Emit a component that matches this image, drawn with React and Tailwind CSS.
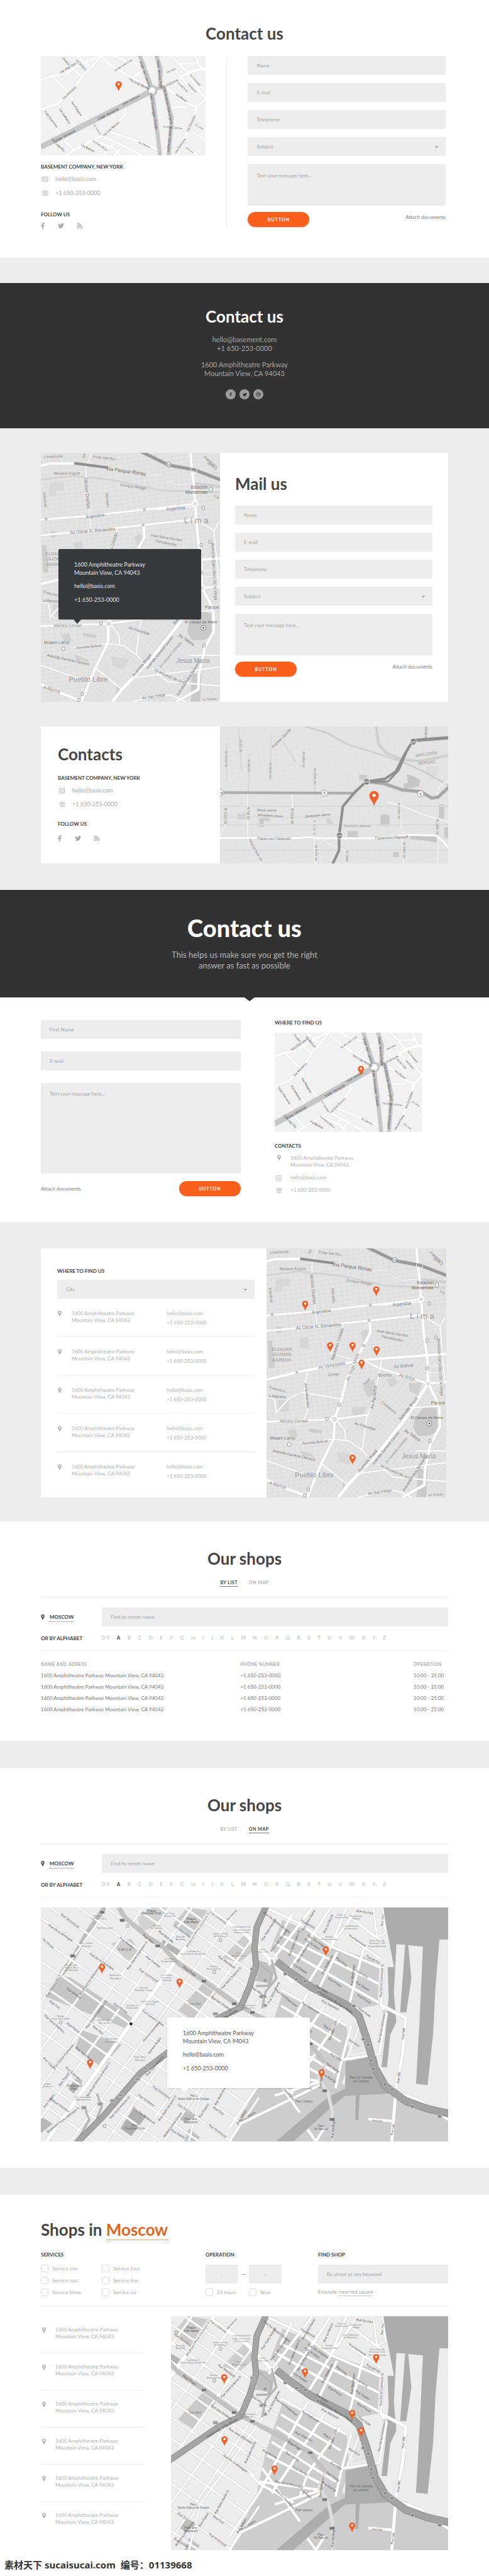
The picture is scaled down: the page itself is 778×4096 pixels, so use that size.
import React from 'react';
import { FaFacebookF, FaTwitter, FaRss, FaDribbble, FaChevronDown } from 'react-icons/fa';

/* ---------- map data ---------- */

// Every map keeps its own survey grid: origin + unit turn grid points into pixels.
// roads: [path, width, colour], areas: [path, fill], labels: [x1, y1, x2, y2, text, size, colour]

const romeMap = {
  id: 'rome',
  origin: [131, 340],
  unit: [0.4962, 0.2617],
  size: [262, 158],
  bg: '#f1f1f1',
  casing: '#e2e2e2',
  areas: [],
  roads: [
    ['M131 487L168 462L210 448L262 390L325 335', 3, '#fff'],
    ['M325 340L262 470L240 530L205 590L183 632L131 662', 3, '#fff'],
    ['M168 462L210 540L262 690L300 760L335 830L400 890L455 943', 3, '#fff'],
    ['M205 340L235 420L262 470', 3, '#fff'],
    ['M247 340L285 400', 3, '#fff'],
    ['M325 340L345 385L420 470L480 530', 3, '#fff'],
    ['M365 340L420 385L447 388', 3, '#fff'],
    ['M183 632L240 765L150 870', 2, '#fff'],
    ['M135 655L160 720L200 840L238 915', 3, '#fff'],
    ['M380 600L403 655L403 690L370 760L330 820L290 860L235 915L210 943', 3, '#fff'],
    ['M345 795L430 850L510 910', 3, '#fff'],
    ['M300 850L365 900L385 943M365 865L330 943M390 895L368 943', 3, '#fff'],
    ['M515 535L560 490L610 435L660 415', 4, '#fff'],
    ['M420 480L455 430L480 420', 3, '#fff'],
    ['M545 340L575 390L600 440L640 560L660 600', 3, '#fff'],
    ['M575 388L635 382L625 340M635 382L645 420L660 430', 3, '#fff'],
    ['M535 540L590 620L630 650L660 600M550 655L600 648', 3, '#fff'],
    ['M630 650L610 760L592 830L565 943', 4, '#fff'],
    ['M505 770L595 775L660 855M540 720L565 740', 2, '#fff'],
    ['M592 880L630 943M610 740L660 790', 3, '#fff'],
    ['M530 450L600 590M600 440L660 560M560 420L600 520', 2, '#fff'],
    ['M145 790L175 850M150 830L195 780M420 690L445 730L425 740', 2, '#f7f7f7'],
    ['M131 893L487 552', 9, '#c6c6c6'],
    ['M447 335L487 540', 6, '#c6c6c6'],
    ['M500 335L515 420L513 520L527 545L550 720L540 950', 6, '#c6c6c6'],
    ['M487 560L500 740L513 950', 6, '#c6c6c6'],
    ['M490 545L525 525', 6, '#c6c6c6'],
  ],
  dots: [[487, 550, 7, '#fff', '#c6c6c6', 4]],
  labels: [
    [195, 438, 240, 386, 'Via Villa Glori', 5],
    [205, 342, 222, 380, 'Duano', 5],
    [250, 345, 270, 385, 'Via Bronzi', 5],
    [370, 410, 420, 350, 'Via dei Laan Fusti', 4],
    [205, 592, 237, 535, 'Via Mentana', 5],
    [234, 625, 258, 692, 'Via Podgora', 5],
    [196, 670, 220, 738, 'Via Solferino', 5],
    [145, 688, 172, 755, 'Viale Piacenza', 5],
    [420, 484, 472, 534, 'Via Luigi Moretti', 5],
    [455, 392, 474, 492, 'Viale del Lavoro', 6],
    [507, 375, 514, 485, 'Viale Marco Polo', 6],
    [395, 630, 440, 586, 'Viale Venezia', 5],
    [320, 718, 372, 668, 'Viale Venezia', 6],
    [182, 852, 234, 800, 'Viale Venezia', 6],
    [486, 600, 498, 752, 'Viale Giuseppe Duodo', 6],
    [530, 565, 546, 720, 'Via Antonio Marangoni', 6],
    [547, 812, 541, 940, 'Antonio Marangoni', 5],
    [335, 815, 374, 750, 'Via San Rocco', 5],
    [302, 760, 322, 812, 'Via Volturno', 4],
    [448, 865, 476, 890, 'Via Silenzio', 4],
    [300, 855, 340, 908, 'Via Pietro Micca', 4],
    [262, 906, 300, 942, 'Via Battisti', 5],
    [168, 872, 205, 940, 'Via Luigi Pio', 5],
    [525, 525, 562, 490, 'Via Piemonte', 5],
    [536, 438, 560, 418, 'Via Istria', 4],
    [570, 500, 600, 556, 'Via del Frati', 4],
    [604, 512, 626, 556, 'Via Brunei', 4],
    [566, 575, 595, 612, 'Via Bonzi', 5],
    [612, 460, 638, 512, 'Via Giuseppe', 4],
    [523, 768, 580, 778, 'Via della Cisterna', 4],
    [602, 788, 620, 710, 'Via Graziano', 5],
    [566, 940, 586, 880, 'Via Gemona', 5],
    [625, 750, 660, 788, 'Via Jona', 4],
    [595, 900, 618, 930, 'Via Livia', 4],
  ],
};

const limaMap = {
  id: 'lima',
  origin: [854, 127],
  unit: [0.4962, 0.3102],
  size: [286, 396],
  bg: '#e3e3e3',
  casing: '#d6d6d6',
  grid: '#d7d7d7',
  areas: [
    ['M1330 1000L1362 935L1400 950L1404 1060L1380 1085L1340 1088L1324 1045Z', '#c9c9c9'],
    ['M1338 1255L1370 1262L1366 1402L1336 1402Z', '#cacaca'],
    ['M1162 840L1198 795L1206 870L1180 890Z', '#cfcfcf'],
    ['M1310 818L1352 815L1340 880L1312 860Z', '#d0d0d0'],
    ['M858 600L872 600L878 690L880 740L862 740Z', '#cecece'],
    ['M885 280L930 280L930 320L905 320L905 350L878 350Z', '#d8d8d8'],
    ['M1155 560L1175 540L1185 590L1165 610Z', '#d3d3d3'],
    ['M1128 940L1175 940L1165 985L1130 985Z', '#d3d3d3'],
    ['M960 590L985 580L990 640L965 640Z', '#d5d5d5'],
    ['M1240 800L1262 785L1275 815L1250 840Z', '#d3d3d3'],
    ['M885 530L902 530L902 560L885 560Z', '#cdcdcd'],
    ['M960 1160L1000 1180L1010 1200L970 1190Z', '#d2d2d2'],
    ['M1080 1170L1140 1185L1120 1235L1085 1220Z', '#d7d7d7'],
    ['M990 1050L1035 1060L1030 1075L992 1068Z', '#cdcdcd'],
    ['M920 1060L945 1050L955 1090L930 1095Z', '#d2d2d2'],
    ['M1100 1320L1120 1350L1095 1370Z', '#cfcfcf'],
    ['M890 905L925 905L925 960L900 968Z', '#d6d6d6'],
  ],
  roads: [
    ['M854 265L960 245L1100 270L1240 320L1430 330', 2, '#d2d2d2'],
    ['M1345 285L1430 300', 4, '#cfcfcf'],
    ['M1018 127L1000 200L1000 300L1008 400L1017 530', 2, '#f8f8f8'],
    ['M1070 203L1195 240L1240 240L1260 275L1290 290L1345 285', 1, '#fff'],
    ['M854 470L1010 450L1187 418L1225 412L1350 388', 3, '#fff'],
    ['M1225 418L1350 402', 2, '#fff'],
    ['M854 550L1000 528L1185 497L1350 468', 3, '#fff'],
    ['M854 195L880 183L962 180', 4, '#fff'],
    ['M1335 127L1338 200L1345 285L1350 390L1358 560L1370 700L1372 820', 4, '#fff'],
    ['M1350 468L1410 525L1420 700L1426 820M1412 525L1425 480', 2, '#fff'],
    ['M854 800L950 762L1110 715L1165 698L1430 668', 4, '#fff'],
    ['M1185 497L1187 560L1165 625L1130 730L1110 800L1095 900L1072 1000L1070 1100L1030 1230L985 1402', 4, '#fff'],
    ['M1100 520L1085 600L1060 665L1165 712', 2, '#f8f8f8'],
    ['M1165 700L1215 740L1372 820L1430 812', 3, '#fff'],
    ['M1372 820L1300 1000L1210 1180L1115 1340L1085 1402', 5, '#fff'],
    ['M854 1015L1072 1003L1180 980', 3, '#fff'],
    ['M1225 690L1205 850L1190 930L1175 1000L1160 1160', 2, '#fff'],
    ['M960 1125L1072 1105L1120 1115L1160 1160L1200 1225', 2, '#fff'],
    ['M1080 1010L1105 1060L1108 1110', 2, '#fff'],
    ['M854 1215L985 1290', 2, '#fff'],
    ['M854 1312L920 1360L985 1398', 4, '#fff'],
    ['M985 765L975 850L985 960L975 1005', 2, '#fff'],
    ['M885 970L880 900L854 890M885 970L930 890L970 865L1095 900', 2, '#fff'],
    ['M1372 820L1408 930L1410 1040L1380 1130L1362 1260L1360 1340L1290 1402', 4, '#fff'],
    ['M1310 945L1410 935M1330 1165L1430 1165M1150 1280L1430 1225', 2, '#fff'],
    ['M1210 1230L1260 1300L1430 1322', 2, '#fff'],
    ['M1150 1402L1210 1380L1270 1368L1320 1402M1030 1230L1115 1340', 2, '#fff'],
    ['M1372 765L1430 760M1365 735L1430 725', 2, '#f4f4f4'],
    ['M962 180L1070 203', 4, '#8f8f8f'],
    ['M1175 120L1265 190L1350 215L1435 268', 5, '#9a9a9a'],
  ],
  dots: [
    [1072, 1003, 5, '#ddd', '#fff', 2],
    [1372, 820, 4, '#ddd', '#fff', 2],
    [1350, 388, 4, '#ddd', '#fff', 2],
    [1345, 215, 5, 'none', '#f4f4f4', 1],
    [1265, 187, 4, '#fff', '#888', 1],
    [1376, 1024, 4, '#fff', '#777', 1],
    [1376, 1024, 1, '#444', '#444', 1],
    [927, 1132, 3, '#fff', '#999', 1],
    [872, 466, 2, '#ccc', '#bbb', 1],
    [1187, 418, 2, '#ccc', '#bbb', 1],
    [1183, 497, 2, '#ccc', '#bbb', 1],
    [1165, 625, 2, '#ccc', '#bbb', 1],
    [951, 762, 2, '#ccc', '#bbb', 1],
  ],
  boxes: [
    [1400, 315, 5, 7], [1376, 410, 4, 5], [1397, 584, 4, 5], [1369, 600, 4, 5], [1369, 741, 4, 5],
    [1087, 928, 4, 5], [1048, 1001, 4, 5], [1378, 1115, 4, 5], [988, 1363, 4, 5], [977, 1394, 4, 5],
  ],
  labels: [
    [858, 147, 918, 143, 'o Horizonte', 6, '#888'],
    [1020, 138, 1095, 153, 'Pinar Del Rio', 6, '#888'],
    [1062, 207, 1195, 237, 'Via Parque Rimac', 8, '#666'],
    [892, 233, 985, 231, 'Mariano Angulo', 6, '#888'],
    [1107, 290, 1197, 310, 'Enrique Meiggs', 6, '#888'],
    [999, 255, 1009, 415, 'Nicolas Dueñas', 7, '#777'],
    [1066, 328, 1071, 412, 'Monsefu', 6, '#888'],
    [862, 323, 868, 412, 'Industrial', 6, '#888'],
    [992, 147, 994, 127, 'Sa', 6, '#888'],
    [1335, 303, 1391, 303, 'Estacion', 7, '#666'],
    [1317, 330, 1391, 330, 'Monserrate', 7, '#666'],
    [998, 455, 1060, 443, 'Argentina', 7, '#777'],
    [1256, 415, 1319, 407, 'Argentina', 7, '#777'],
    [949, 535, 1093, 515, 'Av Oscar R. Benavides', 7, '#777'],
    [1314, 472, 1392, 472, 'L i m a', 13, '#999'],
    [1201, 547, 1314, 577, 'Jose Maria Zorritos', 6, '#888'],
    [1220, 577, 1293, 600, 'Pomabamba', 6, '#888'],
    [1064, 700, 1097, 535, 'Naciones Unidas', 7, '#777'],
    [871, 644, 935, 644, 'ELEAZAR', 7, '#999'],
    [871, 671, 935, 671, 'GUZMAN', 7, '#999'],
    [871, 698, 935, 698, 'BARRON', 7, '#999'],
    [1021, 738, 1105, 714, 'Av Venezuela', 7, '#777'],
    [1049, 777, 1090, 770, 'Orrego', 6, '#888'],
    [1112, 805, 1147, 665, 'Av Tingo Maria', 7, '#888'],
    [1262, 733, 1325, 725, 'Av Bolivia', 7, '#888'],
    [1206, 776, 1260, 776, 'Breña', 8, '#888'],
    [1279, 773, 1331, 798, 'Av Arica', 7, '#777'],
    [1165, 828, 1186, 792, 'Napo', 6, '#888'],
    [979, 810, 988, 950, 'Av la Alborada', 6, '#777'],
    [1191, 950, 1204, 830, 'Av Aguarico', 7, '#777'],
    [856, 838, 914, 860, 'Francisca', 6, '#888'],
    [857, 884, 918, 888, 'a Mariana', 6, '#777'],
    [1221, 910, 1272, 976, 'Centenario', 6, '#888'],
    [1280, 1005, 1336, 892, 'Avenida Brasil', 7, '#777'],
    [1383, 920, 1428, 920, 'Parque', 7, '#777'],
    [1314, 994, 1430, 994, 'El Campo de Marte', 6, '#666'],
    [889, 1013, 994, 1010, 'Mariano Cornejo', 6, '#777'],
    [1132, 1020, 1208, 1058, 'Av Colombia', 6, '#777'],
    [864, 1098, 948, 1098, 'Museo Larco', 7, '#777'],
    [960, 1127, 1058, 1112, 'Avenida Bolivar', 6, '#777'],
    [864, 1160, 1020, 1214, 'Avenida General Clement', 6, '#777'],
    [1297, 1058, 1347, 1112, 'Av Talara', 7, '#777'],
    [1188, 1247, 1286, 1052, 'Avenida General Garzón', 6, '#777'],
    [1234, 1232, 1306, 1092, 'Av Horacio Urteaga', 6, '#999'],
    [1148, 1275, 1208, 1158, 'Avenida Brasil', 7, '#777'],
    [1275, 1194, 1410, 1194, 'Jesus Maria', 10, '#999'],
    [1212, 1235, 1328, 1315, 'Av Husares de Junin', 6, '#777'],
    [933, 1287, 1082, 1287, 'Pueblo Libre', 11, '#999'],
    [1296, 1402, 1362, 1238, 'Avenida Felipe Salaverry', 6, '#777'],
    [1416, 590, 1427, 880, 'Avenida Garcilaso de la Vega', 7, '#888'],
    [856, 1325, 906, 1352, 'a Marina', 7, '#777'],
    [1170, 1397, 1265, 1375, 'Av San Felipe', 6, '#777'],
    [1368, 1394, 1426, 1392, 'Lo Velarde', 5, '#888'],
    [1400, 130, 1430, 170, 'Francisco', 6, '#777'],
    [1402, 175, 1430, 210, 'Jirón J', 6, '#777'],
    [1415, 345, 1430, 358, 'Ca', 6, '#888'],
    [1259, 188, 1271, 188, '1N', 5, '#555'],
  ],
};

const kansasMap = {
  id: 'kansas',
  origin: [706, 103],
  unit: [0.4962, 0.2908],
  size: [363, 218],
  bg: '#e4e4e4',
  casing: '#dadada',
  grid: '#dedede',
  areas: [
    ['M1305 365L1325 375L1348 395L1345 430L1320 440L1296 446L1294 418L1308 410Z', '#c6c6c6'],
    ['M1220 590L1232 584L1250 590L1250 648L1222 648Z', '#c8c8c8'],
    ['M1115 675L1148 675L1148 712L1115 712Z', '#cacaca'],
    ['M762 582L790 582L790 612L762 612Z', '#cfcfcf'],
    ['M832 605L866 605L866 620L846 620L846 652L832 652Z', '#cacaca'],
    ['M1152 368L1178 368L1178 402L1152 395Z', '#cbcbcb'],
    ['M1408 530L1425 530L1425 610L1408 610Z', '#c9c9c9'],
    ['M1315 702L1396 698L1405 740L1370 728L1318 720Z', '#c6c6c6'],
    ['M1262 790L1280 790L1280 818L1262 818Z', '#cacaca'],
    ['M1425 655L1438 655L1438 713L1425 713Z', '#cacaca'],
    ['M1045 600L1062 610L1068 640L1050 640Z', '#d2d2d2'],
    ['M1365 325L1400 318L1410 345L1385 405L1368 360Z', '#dcdcdc'],
  ],
  roads: [
    ['M765 103L775 345M727 200L727 400M870 150L868 400M800 250L798 465M975 230L975 330M1010 330L1010 465M905 180L950 300', 1, '#d4d4d4'],
    ['M706 540L1438 540M706 640L1438 640M706 780L1438 780M706 600L1100 600', 1, '#dadada'],
    ['M980 103L1050 140L1120 205L1180 235L1280 290L1360 350L1438 425', 2, '#cbcbcb'],
    ['M1206 103L1215 200L1240 250L1290 285L1350 292L1438 262', 5, '#d8d8d8'],
    ['M1206 103L1215 200L1240 250L1290 285L1350 292L1438 262', 1, '#bdbdbd'],
    ['M795 465L795 720L815 770L838 854M938 465L938 560M1007 600L1010 854M725 560L725 640L706 700', 2, '#f4f4f4'],
    ['M706 713L960 713L990 708L1020 715L1190 715L1320 695L1400 700L1420 730L1438 765', 3, '#fff'],
    ['M1030 710L1060 750L1110 785L1110 854M1285 500L1285 600L1295 854M1405 610L1405 854', 2, '#f2f2f2'],
    ['M1240 515L1300 545L1350 580L1438 625', 2, '#f6f6f6'],
    ['M1438 400L1410 430L1400 480', 2, '#f4f4f4'],
    ['M706 465L1140 468', 4, '#acacac'],
    ['M1175 405L1230 415L1290 450L1350 460L1385 495L1405 490L1440 435', 5, '#a8a8a8'],
    ['M1440 165L1325 180L1305 240L1280 340L1245 405L1185 405', 3, '#8f8f8f'],
    ['M1325 180L1300 250L1270 350L1235 390L1175 405L1140 460L1100 540L1088 700L1088 780L1066 860', 4, '#8f8f8f'],
    ['M1440 165L1325 180', 5, '#8f8f8f'],
  ],
  dots: [
    [708, 465, 5, '#fff', '#999', 1],
    [1041, 468, 5, '#fff', '#999', 1],
    [1349, 472, 5, '#fff', '#999', 1],
    [1326, 187, 5, '#777', '#eee', 1],
    [1176, 406, 5, '#777', '#eee', 1],
    [1089, 700, 5, '#777', '#eee', 1],
  ],
  labels: [
    [702, 466, 714, 466, '5', 6, '#444'],
    [1035, 469, 1047, 469, '5', 6, '#444'],
    [1343, 473, 1355, 473, '5', 6, '#444'],
    [1316, 188, 1336, 188, '635', 5, '#fff'],
    [1166, 407, 1186, 407, '635', 5, '#fff'],
    [1079, 701, 1099, 701, '635', 5, '#fff'],
    [875, 210, 930, 115, 'Норман Драйв', 6, '#888'],
    [773, 178, 773, 242, 'N 60 St', 6, '#999'],
    [727, 238, 727, 325, 'N 63rd St', 6, '#999'],
    [798, 285, 798, 350, 'N 59 St', 6, '#999'],
    [868, 303, 868, 387, 'N 55th St', 6, '#999'],
    [975, 240, 975, 328, 'N 49th Q', 6, '#999'],
    [1010, 335, 1010, 418, 'N 47th St', 6, '#999'],
    [725, 546, 725, 640, 'N 63rd St', 6, '#777'],
    [796, 542, 796, 614, 'N 59 St', 6, '#777'],
    [937, 546, 937, 640, 'N 51st St', 6, '#777'],
    [1008, 615, 1008, 700, 'N 47th St', 6, '#999'],
    [1014, 768, 1014, 854, 'N 47th St', 6, '#888'],
    [1114, 792, 1114, 854, 'N 38th', 6, '#888'],
    [1281, 518, 1281, 612, 'N 18th St', 6, '#888'],
    [1297, 732, 1297, 828, 'N 18th St', 6, '#888'],
    [1404, 606, 1404, 700, 'N 10th St', 6, '#777'],
    [1333, 262, 1402, 247, 'МИССУРИ', 7, '#999'],
    [1342, 305, 1398, 294, 'КАНЗАС', 7, '#999'],
    [819, 560, 893, 562, 'Йекер-авеню', 5, '#777'],
    [819, 584, 916, 594, 'Джорджия-авеню', 5, '#777'],
    [970, 594, 1068, 582, 'Джорджия-авеню', 5, '#777'],
    [1103, 647, 1188, 647, 'Хаскелл-авеню', 6, '#999'],
    [820, 716, 937, 716, 'Параллел-Паркуэй', 6, '#777'],
    [1198, 714, 1315, 706, 'Параллел-Паркуэй', 6, '#777'],
    [800, 730, 840, 854, 'Медоуларк-лн', 6, '#888'],
    [1366, 150, 1366, 103, 'Бофорд', 5, '#888'],
  ],
};

const montrealMap = {
  id: 'montreal',
  origin: [130, 25],
  unit: [0.4962, 0.3005],
  size: [648, 372],
  bg: '#ececec',
  casing: '#c6c6c6',
  areas: [
    ['M600 25L665 40L610 175L555 110Z', '#cbcbcb'],
    ['M785 165L815 250L765 318L712 290Z', '#cdcdcd'],
    ['M355 215L420 190L445 255L410 312Z', '#cecece'],
    ['M190 385L225 395L430 615L408 668L150 500Z', '#c6c6c6'],
    ['M262 675L390 750L325 870L240 770Z', '#c6c6c6'],
    ['M648 430L692 480L615 620L570 570Z', '#c9c9c9'],
    ['M520 195L580 255L568 305L518 240Z', '#b4b4b4'],
    ['M440 80L485 25L535 25L500 130L450 150Z', '#d2d2d2'],
    ['M425 1090L468 1130L420 1235L385 1195Z', '#b0b0b0'],
    ['M130 1130L168 1170L130 1220Z', '#b8b8b8'],
    ['M605 1195L640 1240L630 1262L590 1262Z', '#c4c4c4'],
    ['M600 1100L625 1130L595 1165L570 1140Z', '#bdbdbd'],
    ['M240 930L262 955L235 1010L218 985Z', '#b5b5b5'],
    ['M905 90L1000 160L1060 230L1190 300L1215 345L1210 540L1150 560L1030 480L930 350L890 290L868 240Z', '#cdcdcd'],
    ['M905 480L1110 650L1120 830L1095 960L1240 990L1290 1020L1340 1060L1438 1140L1438 1262L735 1262L820 980L850 750Z', '#cdcdcd'],
    ['M1225 25L1438 25L1438 195L1408 195L1395 450L1388 690L1370 965L1333 958L1345 600L1355 232L1308 225L1318 400L1302 580L1282 580L1298 222L1270 220L1262 480L1270 630L1250 700L1240 870L1222 870L1235 690L1245 500L1242 340L1262 340L1245 190Z', '#acacac'],
    ['M1108 840L1205 805L1222 950L1245 985L1105 995Z', '#adadad'],
    ['M885 1262L950 1170L1050 1030L1105 985L1245 982L1245 1010L1150 1018L1105 1022L1060 1085L940 1262Z', '#adadad'],
    ['M1140 1015L1152 1015L1148 1150L1138 1150Z', '#adadad'],
    ['M820 300L880 330L870 430L810 410Z', '#c0c0c0'],
    ['M1130 630L1170 700L1175 780L1130 800Z', '#e4e4e4'],
  ],
  roads: [
    ['M335 25L275 170L235 290L190 390', 7, '#bdbdbd'],
    ['M160 25L835 801M250 25L850 715M340 25L870 635M430 25L885 550M510 25L820 380M590 25L780 243', 3, '#fff'],
    ['M130 80L815 868M130 190L800 960M130 310L790 1069M130 430L770 1166M130 560L740 1262', 3, '#fff'],
    ['M130 680L636 1262M130 820L514 1262M130 940L410 1262M130 1060L305 1262', 3, '#fff'],
    ['M348 25L130 526M458 25L130 780M543 25L130 975M615 25L130 1140M765 25L226 1262M830 140L340 1262', 3, '#fff'],
    ['M685 25L148 1262', 6, '#fff'],
    ['M820 390L440 1262M860 440L525 1262M895 440L610 1090M640 1030L605 1262M735 1262L830 1030', 3, '#fff'],
    ['M850 25L960 110L1060 230L1222 345', 4, '#fff'],
    ['M935 60L900 170L1215 430M880 215L1215 530M1110 170L1222 300', 4, '#fff'],
    ['M1000 25L860 330M1060 25L920 370M1110 25L1060 230L985 430M1145 25L1110 110L1060 230', 4, '#fff'],
    ['M1165 240L1120 530M1080 260L1020 460M1125 80L1200 175L1222 200', 4, '#fff'],
    ['M900 460L1110 650M900 545L1092 735M885 610L1085 820M870 690L1075 900M855 760L1040 920', 4, '#fff'],
    ['M840 830L960 1110M985 480L830 960L735 1190M1040 540L905 880L870 960M1090 610L985 860L960 980', 4, '#fff'],
    ['M1125 650L1095 830L1075 980M830 900L1030 945L880 1020M800 860L830 910L940 1010M1030 960L770 1170L735 1262', 4, '#fff'],
    ['M1228 335L1220 540L1238 590L1215 800L1095 830', 4, '#fff'],
    ['M1220 540L1300 610L1290 800L1270 960L1255 1262', 5, '#fff'],
    ['M1195 25L1208 180L1236 160L1225 25M1110 830L1150 660', 3, '#fff'],
    ['M985 1200L1012 1262M1040 1190L1012 1262M1180 1145L1255 1155M1290 1010L1345 1045L1438 1150', 4, '#fff'],
    ['M680 50L790 170L860 290L940 420', 7, '#fff'],
    ['M380 25L400 80L480 190L520 230L570 320L650 410L760 540L990 740L1042 850', 7, '#c2c2c2'],
    ['M1042 850L1020 930L1050 1000L1065 1110L1065 1262', 5, '#dedede'],
    ['M870 300L885 400L850 470L840 560M830 320L870 380L860 440L820 440', 3, '#b5b5b5'],
    ['M310 1010L325 1080L300 1180M270 1080L285 1150L245 1262', 3, '#b5b5b5'],
    ['M245 1270L330 1130L450 900L540 790L700 610L770 555L800 440L820 330L815 240L822 130L852 20', 10, '#8c8c8c'],
    ['M245 1270L330 1130L450 900L540 790L700 610L770 555L800 440L820 330L815 240L822 130L852 20', 8, '#a5a5a5'],
    ['M885 310L930 370L1000 450L1110 540L1150 600L1175 720L1200 870L1235 970L1300 1050L1370 1090L1445 1118', 12, '#8c8c8c'],
    ['M885 310L930 370L1000 450L1110 540L1150 600L1175 720L1200 870L1235 970L1300 1050L1370 1090L1445 1118', 10, '#a3a3a3'],
  ],
  dots: [[419, 641, 2, '#222', '#222', 1]],
  boxes: [
    [327, 50, 8, 5, '#777'], [391, 93, 8, 5, '#777'], [232, 281, 8, 5, '#777'], [505, 228, 8, 5, '#777'],
    [653, 415, 8, 5, '#777'], [750, 534, 8, 5, '#777'], [808, 581, 8, 5, '#777'], [994, 747, 8, 5, '#777'],
    [1040, 995, 8, 5, '#777'], [1063, 1147, 8, 5, '#777'], [465, 875, 8, 5, '#999'], [440, 933, 8, 5, '#999'],
    [386, 1018, 8, 5, '#999'], [360, 1048, 8, 5, '#999'], [320, 1065, 8, 5, '#999'], [268, 1085, 8, 5, '#999'],
    [690, 588, 8, 5, '#999'], [914, 376, 6, 5, '#888'], [950, 404, 6, 5, '#888'], [978, 415, 6, 5, '#888'],
    [1019, 472, 6, 5, '#888'], [1133, 547, 6, 5, '#888'], [1164, 721, 6, 5, '#888'], [1180, 752, 6, 5, '#888'],
    [1189, 835, 6, 5, '#888'], [1195, 880, 6, 5, '#888'], [1234, 961, 6, 5, '#888'], [1256, 988, 6, 5, '#888'],
    [1322, 1078, 6, 5, '#888'], [1409, 1130, 6, 5, '#888'], [807, 352, 6, 5, '#999'], [849, 410, 6, 5, '#999'],
    [837, 497, 6, 5, '#999'], [849, 543, 6, 5, '#999'], [408, 124, 4, 5], [686, 366, 4, 5], [706, 197, 4, 5],
    [194, 633, 4, 5], [334, 1181, 4, 5],
  ],
  labels: [
    [200, 65, 248, 125, 'Rue Drummond', 5],
    [163, 124, 225, 193, 'Rue De la Montagne', 5],
    [130, 195, 158, 235, 'Du Musée', 5],
    [295, 275, 358, 345, 'Rue De la Montagne', 5],
    [387, 185, 425, 235, 'Rue Stanley', 5],
    [460, 170, 490, 210, 'Rue Peel', 5],
    [512, 153, 552, 205, 'Rue Metcalfe', 5],
    [560, 122, 605, 175, 'Rue Mansfield', 5],
    [680, 30, 718, 75, 'Rue University', 5],
    [605, 210, 660, 75, 'Boulevard René-Lévesque O', 5],
    [732, 60, 752, 25, 'Rue Belmont', 4],
    [470, 285, 510, 335, 'Rue Stanley', 5],
    [450, 355, 500, 412, 'Rue Drummond', 5],
    [590, 342, 622, 382, 'Rue Peel', 6],
    [703, 285, 748, 340, 'Rue Mansfield', 5],
    [714, 443, 764, 352, 'Rue Saint-Antoine O', 5],
    [414, 335, 462, 220, 'Rue Sainte-Catherine O', 5],
    [262, 470, 318, 335, 'Boulevard De Maisonneuve', 5],
    [150, 488, 188, 390, 'Rue Sherbrooke O', 5],
    [217, 455, 256, 500, 'Rue Mackay', 5],
    [160, 520, 190, 555, 'Rue Guy', 5],
    [367, 535, 404, 578, 'Rue Bishop', 5],
    [283, 645, 332, 535, 'Rue Sainte-Catherine O', 5],
    [218, 640, 250, 680, 'Rue Pierce', 5],
    [130, 605, 178, 675, 'Rue Saint-Mathieu', 5],
    [300, 655, 328, 690, 'Rue Guy', 5],
    [465, 578, 517, 640, "Rue Lucien-L'Allier", 5],
    [463, 720, 502, 645, 'Avenue Overdale', 5],
    [248, 772, 292, 830, 'Rue Saint-Marc', 5],
    [176, 865, 228, 760, 'Rue Sainte-Catherine', 5],
    [215, 875, 258, 940, 'Rue Saint-Marc', 5],
    [192, 960, 216, 905, 'Rue Tupper', 5],
    [130, 825, 162, 875, 'Rue Towers', 5],
    [285, 1005, 342, 862, 'Boulevard René-Lévesque O', 5],
    [160, 1200, 242, 1095, 'Boulevard René-Lévesque O', 5],
    [136, 1075, 162, 1020, 'Rue Tupper', 5],
    [165, 1040, 215, 1098, 'Avenue Seymour', 5],
    [478, 790, 510, 720, 'Avenue Argyle', 5],
    [470, 910, 520, 815, 'Rue Saint-Antoine', 5],
    [357, 1130, 408, 1035, 'Rue Saint-Antoine O', 5],
    [432, 1090, 490, 1160, 'Rue Des Seigneurs', 5],
    [447, 1020, 490, 1070, 'Rue St-Martin', 5],
    [493, 975, 540, 1030, 'Rue Richmond', 5],
    [574, 1070, 620, 1122, 'Rue Richmond', 5],
    [514, 1138, 556, 1035, 'Rue Saint-Jacques O', 5],
    [674, 1180, 720, 1235, 'Rue Richmond', 5],
    [557, 1235, 584, 1262, 'Rue Delisle', 5],
    [528, 1245, 575, 1140, 'Avenue Lionel-Groulx', 5],
    [640, 1130, 664, 1070, 'Rue Paxton', 5],
    [690, 1065, 728, 950, 'Rue Notre-Dame O', 5],
    [686, 1085, 714, 1115, 'Rue Guy', 5],
    [762, 1165, 784, 1100, 'Rue William', 5],
    [776, 1150, 812, 1110, 'Rue Ottawa', 5],
    [840, 195, 880, 90, 'Rue Saint-Antoine', 5],
    [870, 250, 915, 150, 'Rue Saint-Jacques', 5],
    [852, 35, 922, 125, 'Rue Du Square-Victoria', 5],
    [968, 95, 1004, 130, 'Rue McGill', 5],
    [928, 270, 955, 160, 'Rue Notre-Dame O', 5],
    [955, 305, 985, 220, 'Rue St-Maurice', 5],
    [975, 95, 1000, 25, 'Rue Notre-Dame', 5],
    [1037, 160, 1064, 60, 'Rue Le Moyne', 5],
    [990, 175, 1048, 240, 'Rue De Longueuil', 5],
    [980, 195, 1020, 240, 'Rue St-Henri', 5],
    [1122, 175, 1168, 225, 'Rue Normand', 5],
    [1176, 280, 1215, 318, 'Rue McGill', 5],
    [1080, 292, 1110, 330, 'Rue King', 5],
    [1142, 358, 1178, 395, 'Rue King', 5],
    [1142, 420, 1182, 462, 'Rue Queen', 5],
    [1054, 400, 1092, 440, 'Rue Prince', 5],
    [1148, 488, 1186, 528, 'Rue Prince', 5],
    [1152, 560, 1186, 600, 'Rue Duke', 5],
    [1015, 438, 1048, 475, 'Rue Duke', 5],
    [1036, 365, 1060, 290, 'Rue Wellington', 5],
    [1125, 440, 1134, 325, 'Rue Wellington', 5],
    [1220, 480, 1224, 345, 'Rue De la Commune O', 5],
    [1215, 725, 1230, 585, 'Rue De la Commune O', 5],
    [1145, 30, 1190, 42, 'Rue Du Port', 5],
    [1222, 125, 1228, 60, 'Rue - Port', 4],
    [1034, 485, 1118, 570, 'Autoroute Bonaventure', 6],
    [1036, 520, 1080, 560, 'Rue Nazareth', 5],
    [888, 465, 946, 540, 'Rue De l’Inspecteur', 5],
    [862, 520, 890, 430, 'Rue Notre-Dame', 5],
    [972, 530, 1020, 580, 'Rue Dalhousie', 5],
    [944, 330, 978, 365, 'Rue Ottawa', 5],
    [950, 640, 996, 680, 'Rue Shannon', 5],
    [1038, 648, 1068, 682, 'Rue Ann', 5],
    [1122, 728, 1148, 755, 'Rue Ann', 5],
    [924, 690, 962, 730, 'Rue Peel', 6],
    [1062, 800, 1092, 832, 'Rue Peel', 5],
    [918, 745, 956, 785, 'Rue Young', 5],
    [1048, 850, 1085, 892, 'Rue Young', 5],
    [1034, 905, 1074, 945, 'Rue Murray', 5],
    [845, 735, 885, 772, 'Rue Murray', 5],
    [942, 825, 982, 860, 'Rue Murray', 5],
    [888, 900, 965, 925, 'Rue De la Montagne', 5],
    [722, 765, 786, 840, 'Rue De la Montagne', 5],
    [740, 625, 802, 690, "Rue Jean-D'Estrées", 5],
    [785, 800, 816, 690, 'Rue Notre-Dame', 5],
    [674, 652, 748, 580, 'Autoroute Ville-Marie', 6],
    [683, 502, 734, 560, 'Rue Des Rivières', 5],
    [815, 455, 846, 490, 'Rue McLean', 5],
    [890, 950, 935, 1030, 'Rue Du Séminaire', 5],
    [1052, 740, 1080, 610, 'Rue Wellington', 5],
    [1024, 985, 1034, 870, 'Rue Wellington', 5],
    [1064, 1262, 1068, 1165, 'Rue Wellington', 5],
    [1290, 718, 1294, 668, 'Rue Mill', 5],
    [1274, 950, 1278, 900, 'Rue Mill', 5],
    [1255, 1225, 1260, 1178, 'Rue Mill', 5],
    [1194, 1150, 1224, 1154, 'Rue Oak', 4],
    [966, 940, 996, 985, 'Rue Basin', 5],
    [484, 36, 484, 36, 'Place', 6],
    [484, 54, 484, 54, 'Montréal Trust', 5],
    [612, 86, 612, 86, 'Place', 6],
    [612, 103, 612, 103, 'Ville Marie', 5],
    [398, 248, 398, 248, 'Y M C A', 6],
    [315, 69, 315, 69, 'Hôtel Le', 4, '#888'],
    [315, 83, 315, 83, 'Cantlie Suites', 4, '#888'],
    [335, 133, 335, 133, 'Taj Restaurant', 4, '#888'],
    [275, 214, 275, 214, 'Ritz Carlton', 4, '#888'],
    [275, 228, 275, 228, 'Montréal', 4, '#888'],
    [543, 56, 543, 56, 'Les Trois', 4, '#888'],
    [543, 70, 543, 70, 'Brasseurs', 4, '#888'],
    [502, 119, 502, 119, 'Simons', 4, '#888'],
    [502, 133, 502, 133, 'La Maison', 4, '#888'],
    [577, 180, 577, 180, 'Sun Life', 4, '#777'],
    [577, 194, 577, 194, 'Building', 4, '#777'],
    [706, 164, 706, 164, 'Gare centrale', 4, '#888'],
    [706, 178, 706, 178, 'de Montréal', 4, '#888'],
    [773, 128, 773, 128, 'Organisation De', 4, '#888'],
    [773, 142, 773, 142, "L'Aviation Civile", 4, '#888'],
    [773, 156, 773, 156, 'Internationale', 4, '#888'],
    [618, 255, 618, 255, 'Cathédrale', 4, '#888'],
    [618, 269, 618, 269, 'Marie-Reine-du-Monde', 4, '#888'],
    [543, 295, 543, 295, 'Le Piment', 4, '#888'],
    [543, 309, 543, 309, 'Rouge Windsor', 4, '#888'],
    [228, 328, 228, 328, 'Musée des', 4, '#888'],
    [228, 342, 228, 342, 'Beaux Arts', 4, '#888'],
    [228, 356, 228, 356, 'de Montréal', 4, '#888'],
    [765, 266, 765, 266, 'Place', 4, '#888'],
    [765, 280, 765, 280, 'Bonaventure', 4, '#888'],
    [840, 246, 840, 246, 'Delta', 4, '#888'],
    [840, 260, 840, 260, 'Centre-Ville', 4, '#888'],
    [685, 335, 685, 335, 'Station', 4, '#888'],
    [685, 349, 685, 349, 'Bonaventure', 4, '#888'],
    [369, 384, 369, 384, 'Hôtel de la', 4, '#888'],
    [369, 398, 369, 398, 'Montagne', 4, '#888'],
    [533, 382, 533, 382, 'Le Centre', 4, '#888'],
    [533, 396, 533, 396, 'Sheraton', 4, '#888'],
    [533, 410, 533, 410, 'Montréal', 4, '#888'],
    [460, 450, 460, 450, 'Novotel', 4, '#888'],
    [460, 464, 460, 464, 'Montréal Centre', 4, '#888'],
    [480, 521, 480, 521, 'Hôtel Le Crystal', 4, '#888'],
    [480, 535, 480, 535, 'Montréal', 4, '#888'],
    [423, 543, 423, 543, 'Quality Inn', 4, '#888'],
    [423, 557, 423, 557, 'Downtown', 4, '#888'],
    [624, 533, 624, 533, 'Ctre Bell', 5, '#777'],
    [194, 600, 194, 600, 'Station', 4, '#777'],
    [194, 614, 194, 614, 'Guy-Concordia', 4, '#777'],
    [335, 620, 335, 620, 'Upstairs Jazz', 4, '#888'],
    [335, 634, 335, 634, 'Bar & Grill', 4, '#888'],
    [357, 720, 357, 720, 'Restaurant', 4, '#888'],
    [357, 734, 357, 734, 'Bar B Barn', 4, '#888'],
    [448, 817, 448, 817, 'Days Hotel', 4, '#888'],
    [448, 831, 448, 831, 'Montréal', 4, '#888'],
    [792, 543, 792, 543, 'Le Planétarium', 4, '#888'],
    [792, 557, 792, 557, 'de Montréal', 4, '#888'],
    [1093, 62, 1093, 62, 'Olive et', 4, '#888'],
    [1093, 76, 1093, 76, 'Gourmando', 4, '#888'],
    [1140, 69, 1140, 69, 'Restaurant', 4, '#888'],
    [1140, 83, 1140, 83, 'Gibbys', 4, '#888'],
    [1123, 122, 1123, 122, "Ctre d'Histoire", 4, '#888'],
    [1123, 136, 1123, 136, 'de Montréal', 4, '#888'],
    [1055, 180, 1055, 180, 'Holder', 4, '#888'],
    [1055, 194, 1055, 194, 'Restaurant Bar', 4, '#888'],
    [1208, 200, 1208, 200, 'Vieux-Port de', 4, '#888'],
    [1208, 214, 1208, 214, 'Montréal / Old', 4, '#888'],
    [1208, 228, 1208, 228, 'Port of Montréal', 4, '#888'],
    [1157, 925, 1157, 925, 'Parc du Canada', 5, '#666'],
    [1157, 943, 1157, 943, 'de Lachine', 5, '#666'],
    [974, 1050, 974, 1050, 'Parc Gallery', 5, '#666'],
    [1028, 1179, 1028, 1179, 'Parc', 5, '#666'],
    [1028, 1195, 1028, 1195, 'St-Patrick', 5, '#666'],
    [619, 1021, 619, 1021, 'Parc', 5, '#666'],
    [619, 1038, 619, 1038, 'Notre-Dame-de-Grâce', 5, '#666'],
    [610, 1142, 610, 1142, 'Parc des', 5, '#666'],
    [610, 1160, 610, 1160, 'Seigneurs', 5, '#666'],
    [431, 1176, 431, 1176, 'Parc', 5, '#666'],
    [431, 1194, 431, 1194, 'Campbell Ctre', 5, '#666'],
    [237, 967, 237, 967, 'Strathcona', 5, '#666'],
    [237, 984, 237, 984, 'Parc', 5, '#666'],
    [265, 1028, 265, 1028, 'Ctre Canadien', 4, '#777'],
    [265, 1043, 265, 1043, "d'Architecture", 4, '#777'],
    [151, 957, 151, 957, 'Hôtel', 4, '#777'],
    [151, 972, 151, 972, 'Du Fort', 4, '#777'],
  ],
};

/* ---------- map drawing ---------- */

const clamp = (value, min, max) => Math.min(Math.max(value, min), max);

const StreetMap = ({ map, pins = [], pin = 16, crop = 0, width, title }) => {
  const [ox, oy] = map.origin;
  const [w, h] = map.size;
  // a narrower width squeezes the streets only, the lettering keeps its shape
  const kx = width ? (map.unit[0] * width) / w : map.unit[0];
  const ky = map.unit[1];
  const px = (x) => (x - ox) * kx;
  const py = (y) => (y - oy) * ky;
  const vw = (width || w) - crop;

  const placeLabel = ([x1, y1, x2, y2, text, size]) => {
    const turn = Math.atan2(py(y2) - py(y1), px(x2) - px(x1));
    const x = px((x1 + x2) / 2);
    const y = py((y1 + y2) / 2);
    if (x < crop) return null;
    // keep the whole street name inside the frame
    const half = (text.length * size * 0.58) / 2;
    const dx = Math.abs(Math.cos(turn)) * half + Math.abs(Math.sin(turn)) * size * 0.7 + 1;
    const dy = Math.abs(Math.sin(turn)) * half + Math.abs(Math.cos(turn)) * size * 0.7 + 1;
    const cx = clamp(x, crop + dx, crop + vw - dx);
    const cy = clamp(y, dy, h - dy);
    return `translate(${cx} ${cy}) rotate(${(turn * 180) / Math.PI})`;
  };

  return (
    <svg
      viewBox={`${crop} 0 ${vw} ${h}`}
      preserveAspectRatio="xMidYMid slice"
      className="block w-full h-full font-['Liberation_Sans',sans-serif]"
      role="img"
      aria-label={title}
    >
      <rect x={crop} width={vw} height={h} fill={map.bg} />
      {map.grid && (
        <>
          <defs>
            <pattern id={`${map.id}-blocks`} width="9" height="7" patternUnits="userSpaceOnUse" patternTransform="rotate(-8)">
              <path d="M0 0H9M0 0V7" stroke={map.grid} fill="none" />
            </pattern>
            <pattern id={`${map.id}-slant`} width="8" height="6" patternUnits="userSpaceOnUse" patternTransform="rotate(38)">
              <path d="M0 0H8M0 0V6" stroke={map.grid} fill="none" />
            </pattern>
          </defs>
          <rect width={vw} height={h} fill={`url(#${map.id}-blocks)`} />
          {map.id === 'lima' && (
            <>
              <path d="M180 180L286 120V396H60L110 300L150 260Z" fill={map.bg} />
              <path d="M180 180L286 120V396H60L110 300L150 260Z" fill={`url(#${map.id}-slant)`} />
            </>
          )}
        </>
      )}
      <g transform={`scale(${kx} ${ky}) translate(${-ox} ${-oy})`} fill="none" strokeLinejoin="round">
        {map.areas.map(([d, fill]) => (
          <path key={d} d={d} fill={fill} />
        ))}
        {map.roads
          .filter(([, size]) => size < 8)
          .map(([d, size]) => (
            <path key={d + size} d={d} stroke={map.casing} strokeWidth={size + 1} vectorEffect="non-scaling-stroke" />
          ))}
        {map.roads.map(([d, size, color]) => (
          <path key={d + size} d={d} stroke={color} strokeWidth={size} vectorEffect="non-scaling-stroke" />
        ))}
      </g>
      {(map.dots || []).map(([x, y, r, fill, stroke, sw], i) => (
        <circle key={i} cx={px(x)} cy={py(y)} r={r} fill={fill} stroke={stroke} strokeWidth={sw} />
      ))}
      {(map.boxes || []).map(([x, y, bw, bh, fill]) => (
        <rect
          key={`${x}-${y}`}
          x={px(x) - bw / 2}
          y={py(y) - bh / 2}
          width={bw}
          height={bh}
          rx="1"
          fill={fill || '#eee'}
          stroke={fill ? '#ccc' : '#999'}
          strokeWidth="1"
        />
      ))}
      {map.labels.map((label, i) => {
        const at = placeLabel(label);
        if (!at) return null;
        const [, , , , text, size, color = '#555'] = label;
        return (
          <text key={i} transform={at} fontSize={size} fill={color} textAnchor="middle" dominantBaseline="central">
            {text}
          </text>
        );
      })}
      {pins.map(([x, y]) => (
        <g key={`${x}-${y}`} transform={`translate(${px(x)} ${py(y)}) scale(${pin / 16}) translate(-5 -8)`}>
          <path d="M5 0C2.2 0 0 2.2 0 5c0 3.200 3.600 5.400 5 11 1.400-5.600 5-7.800 5-11 0-2.800-2.200-5-5-5z" fill="#f0612a" />
          <circle cx="5" cy="4.500" r="1.800" fill="#fff" />
        </g>
      ))}
    </svg>
  );
};

/* ---------- icons ---------- */

const PinIcon = ({ className }) => (
  <svg viewBox="0 0 10 16" className={className} fill="currentColor" aria-hidden="true">
    <path
      fillRule="evenodd"
      d="M5 0C2.200 0 0 2.200 0 5c0 3.200 3.600 5.400 5 11 1.400-5.600 5-7.800 5-11 0-2.800-2.200-5-5-5zm0 2.500a2.300 2.300 0 1 1 0 4.600 2.300 2.300 0 0 1 0-4.600z"
    />
  </svg>
);

const MailIcon = () => (
  <svg viewBox="0 0 18 16" className="w-[9px] h-2" fill="none" stroke="currentColor" strokeWidth="1.500" aria-hidden="true">
    <rect x="1" y="1" width="16" height="14" rx="1" />
    <path d="M4 4l5 4 5-4M4 12l4-4M14 12l-4-4" />
  </svg>
);

const PhoneIcon = () => (
  <svg viewBox="0 0 20 16" className="w-[10px] h-2" fill="none" stroke="currentColor" strokeWidth="1.500" aria-hidden="true">
    <path d="M1 6V4c2-4 16-4 18 0v2h-4V4.500H5V6zM7 5v2L3.500 12v3h13v-3L13 7V5" />
    <circle cx="10" cy="10.500" r="2" />
  </svg>
);

/* ---------- shared pieces ---------- */

const Heading = ({ children, className = '' }) => (
  <h2 className={`text-[26px] leading-8 font-bold ${className}`}>{children}</h2>
);

const Caption = ({ children, className = '' }) => (
  <h3 className={`text-[8px] leading-3 font-bold uppercase text-[#3f3f3f] ${className}`}>{children}</h3>
);

const TextField = ({ label, type = 'text' }) => (
  <input
    type={type}
    aria-label={label}
    placeholder={label}
    className="block w-full h-[30px] px-[14px] bg-[#ededed] text-[8px] placeholder:text-[#a6a6a6] outline-none"
  />
);

const SelectField = ({ label }) => (
  <div className="grid items-center">
    <select
      aria-label={label}
      className="col-start-1 row-start-1 w-full h-[30px] px-[14px] appearance-none rounded-none bg-[#ededed] text-[8px] text-[#a6a6a6]"
    >
      <option>{label}</option>
    </select>
    <FaChevronDown className="col-start-1 row-start-1 justify-self-end mr-3 w-[5px] h-[5px] text-[#555] pointer-events-none" />
  </div>
);

const MessageField = ({ className = '' }) => (
  <textarea
    aria-label="Message"
    placeholder="Text your message here..."
    className={`block w-full px-[14px] resize-none bg-[#ededed] text-[8px] leading-3 placeholder:text-[#a6a6a6] outline-none ${className}`}
  />
);

const SubmitButton = () => (
  <button
    type="button"
    className="w-[98px] h-6 rounded-full bg-[#fb5f1c] text-[7px] font-bold tracking-[1px] text-white shadow-sm"
  >
    BUTTON
  </button>
);

const AttachLink = () => (
  <a href="#attach" className="text-[8px] leading-4 text-[#808080]">
    Attach documents
  </a>
);

const MailForm = () => (
  <form className="flex flex-col gap-[13px]">
    <TextField label="Name" />
    <TextField label="E-mail" type="email" />
    <TextField label="Telephone" type="tel" />
    <SelectField label="Subject" />
    <div>
      <MessageField className="h-[66px] pt-3" />
      <div className="flex items-start justify-between mt-[10px]">
        <SubmitButton />
        <AttachLink />
      </div>
    </div>
  </form>
);

const Social = ({ className = '' }) => (
  <div className={`flex items-center gap-5 text-[#aaa] ${className}`}>
    <a href="#facebook" aria-label="Facebook"><FaFacebookF className="w-2 h-[10px] -ml-px" /></a>
    <a href="#twitter" aria-label="Twitter"><FaTwitter className="w-[10px] h-[10px]" /></a>
    <a href="#rss" aria-label="RSS"><FaRss className="w-[10px] h-[10px]" /></a>
  </div>
);

const CompanyContacts = () => (
  <>
    <Caption>Basement company, New York</Caption>
    <ul className="flex flex-col gap-[10px] mt-2 text-[9px] leading-3 text-[#aaa]">
      <li className="flex items-center gap-3 pl-[2px]"><MailIcon />hello@basis.com</li>
      <li className="flex items-center gap-[11px] pl-[2px]"><PhoneIcon />+1 650-253-0000</li>
    </ul>
  </>
);

const Popup = ({ className, tail, tailPos }) => (
  <div className={`absolute w-[227px] h-[112px] rounded-[2px] pt-[18px] pl-[25px] text-[9px] leading-[13px] shadow ${className}`}>
    <p>1600 Amphitheatre Parkway<br />Mountain View, CA 94043</p>
    <p className="mt-2">hello@basis.com</p>
    <p className="mt-[9px]">+1 650-253-0000</p>
    <span className={`absolute top-full border-x-[6px] border-t-[7px] border-x-transparent ${tail} ${tailPos}`} />
  </div>
);

const Address = () => (
  <address className="not-italic text-[8px] leading-[11px]">
    1600 Amphitheatre Parkway
    <br />
    Mountain View, CA 94043
  </address>
);

const letters = 'ABCDEFGHIJKLMNOPQRSTUVWXYZ'.split('');

const ShopFilter = ({ active }) => (
  <>
    <Heading className="text-center">Our shops</Heading>
    <div className="flex justify-center gap-[18px] mt-[17px] text-[7px] leading-[11px] font-bold tracking-[0.5px]">
      {['BY LIST', 'ON MAP'].map((tab) => (
        <button
          key={tab}
          type="button"
          className={tab === active ? 'border-b border-[#777] text-[#3f3f3f]' : 'border-b border-transparent text-[#b0b0b0]'}
        >
          {tab}
        </button>
      ))}
    </div>
    <div className="grid grid-cols-[97px_1fr] items-center gap-y-3 mt-4 pt-4 pb-[13px] border-y border-[#ededed]">
      <div className="flex items-center gap-2 text-[#3f3f3f]">
        <PinIcon className="w-[6px] h-[9px]" />
        <button type="button" className="mt-[2px] border-b border-dotted border-[#777] text-[8px] leading-[13px] font-bold">MOSCOW</button>
      </div>
      <TextField label="Find by street name" />
      <Caption>Or by alphabet</Caption>
      <div className="flex justify-between max-w-[452px] text-[8px] leading-[13px] text-[#b8b8b8]">
        <button type="button">0-9</button>
        {letters.map((letter) => (
          <button key={letter} type="button" className={letter === 'A' ? 'font-bold text-[#3f3f3f]' : ''}>
            {letter}
          </button>
        ))}
      </div>
    </div>
  </>
);

const CheckItem = ({ children }) => (
  <label className="flex items-center gap-[6px] h-3 text-[8px] text-[#b0b0b0]">
    <input type="checkbox" className="w-3 h-3 appearance-none rounded-[3px] border border-[#dcdcdc] bg-white" />
    {children}
  </label>
);

const TimeField = ({ label }) => (
  <input
    aria-label={label}
    placeholder=":"
    className="block w-[52px] h-[30px] bg-[#ededed] text-center text-[8px] placeholder:text-[#888] outline-none"
  />
);

/* ---------- sections ---------- */

const ContactSplit = () => (
  <section className="bg-white px-[65px] pt-[37px] pb-[46px]">
    <Heading className="text-center">Contact us</Heading>
    <div className="grid grid-cols-[262fr_1px_314fr] gap-x-[33px] mt-5 pr-1">
      <div>
        <div className="h-[158px]">
          <StreetMap map={romeMap} pins={[[380, 525]]} title="Map of the office" />
        </div>
        <div className="mt-3">
          <CompanyContacts />
        </div>
        <Caption className="mt-[22px]">Follow us</Caption>
        <Social className="mt-[7px]" />
      </div>
      <div className="bg-[#ededed]" />
      <MailForm />
    </div>
  </section>
);

const ContactDark = () => (
  <section className="bg-[#323232] pt-[37px] pb-[46px] text-center text-[11px] leading-[14px] text-[#a6a6a6]">
    <Heading className="text-white">Contact us</Heading>
    <p className="mt-[14px]">hello@basement.com<br />+1 650-253-0000</p>
    <p className="mt-3">1600 Amphitheatre Parkway<br />Mountain View, CA 94043</p>
    <div className="flex justify-center gap-[6px] mt-[18px] text-[#323232]">
      <a href="#facebook" aria-label="Facebook" className="flex items-center justify-center w-4 h-4 rounded-full bg-[#9c9c9c]">
        <FaFacebookF className="w-[6px] h-[6px]" />
      </a>
      <a href="#twitter" aria-label="Twitter" className="flex items-center justify-center w-4 h-4 rounded-full bg-[#9c9c9c]">
        <FaTwitter className="w-[7px] h-[7px]" />
      </a>
      <a href="#dribbble" aria-label="Dribbble" className="flex items-center justify-center w-4 h-4 rounded-full bg-[#9c9c9c]">
        <FaDribbble className="w-2 h-2" />
      </a>
    </div>
  </section>
);

const ContactCards = () => (
  <section className="px-[65px] pt-[39px] pb-[42px]">
    <div className="grid grid-cols-[285fr_363fr] min-h-[396px] bg-white">
      <div className="relative">
        <StreetMap map={limaMap} title="Map of Lima" />
        <Popup className="left-[28px] top-[153px] bg-[#35393c] text-[#e6e6e6]" tail="border-t-[#35393c]" tailPos="left-6" />
      </div>
      <div className="pt-[33px] pl-6 pr-[25px]">
        <Heading className="mb-[19px]">Mail us</Heading>
        <MailForm />
      </div>
    </div>
    <div className="grid grid-cols-[285fr_363fr] min-h-[218px] mt-[39px] bg-white">
      <div className="pt-7 pl-[27px]">
        <Heading className="mb-4">Contacts</Heading>
        <CompanyContacts />
        <Caption className="mt-[19px]">Follow us</Caption>
        <Social className="mt-3" />
      </div>
      <StreetMap map={kansasMap} pins={[[1200, 498]]} pin={24} title="Map of Kansas City" />
    </div>
  </section>
);

const ContactHero = () => (
  <section className="relative bg-[#323232] pt-[38px] pb-[42px] text-center">
    <h1 className="text-[38px] leading-[44px] font-black text-white">Contact us</h1>
    <p className="mt-[13px] text-[13px] leading-[17px] text-[#b5b5b5]">
      This helps us make sure you get the right
      <br />
      answer as fast as possible
    </p>
    <span className="absolute left-1/2 top-full border-x-8 border-t-[6px] border-x-transparent border-t-[#323232]" />
  </section>
);

const ContactWide = () => (
  <section className="grid grid-cols-[318fr_276fr] gap-x-[54px] bg-white px-[65px] pt-[34px] pb-[41px]">
    <form className="flex flex-col gap-5 pt-[2px]">
      <TextField label="First Name" />
      <TextField label="E-mail" type="email" />
      <div>
        <MessageField className="h-36 pt-[11px]" />
        <div className="flex items-center justify-between mt-3">
          <AttachLink />
          <SubmitButton />
        </div>
      </div>
    </form>
    <div>
      <Caption>Where to find us</Caption>
      <div className="w-[85%] h-[158px] mt-[10px]">
        <StreetMap map={romeMap} width={234} pins={[[440, 572]]} title="Map of the office" />
      </div>
      <Caption className="mt-4">Contacts</Caption>
      <ul className="flex flex-col gap-[9px] mt-2 text-[8px] leading-[11px] text-[#b0b0b0]">
        <li className="grid grid-cols-[25px_1fr]">
          <PinIcon className="ml-1 w-[6px] h-[10px]" />
          <Address />
        </li>
        <li className="grid grid-cols-[25px_1fr] items-center"><span className="pl-[2px]"><MailIcon /></span>hello@basis.com</li>
        <li className="grid grid-cols-[25px_1fr] items-center"><span className="pl-[2px]"><PhoneIcon /></span>+1 650-253-0000</li>
      </ul>
    </div>
  </section>
);

const ShopsCard = () => (
  <section className="px-[65px] pt-[42px] pb-[38px]">
    <div className="grid grid-cols-[359fr_286fr] min-h-[396px] mr-[3px] bg-white">
      <div className="pt-[30px] pl-[26px] pr-[19px]">
        <Caption className="mb-2">Where to find us</Caption>
        <SelectField label="City" />
        <ul className="text-[#b0b0b0]">
          {[1, 2, 3, 4, 5].map((id) => (
            <li
              key={id}
              className="grid grid-cols-[23px_151fr_140fr] h-[61px] pt-[18px] border-b border-[#ededed] last:border-b-0"
            >
              <PinIcon className="w-[6px] h-[10px] mt-px ml-px" />
              <Address />
              <p className="text-[8px] leading-[11px]">
                hello@basis.com
                <span className="block mt-1">+1 650-253-0000</span>
              </p>
            </li>
          ))}
        </ul>
      </div>
      <StreetMap
        map={limaMap}
        pins={[[978, 421], [1206, 347], [1058, 634], [1130, 634], [1207, 655], [1159, 723], [1130, 1210]]}
        title="Shops in Lima"
      />
    </div>
  </section>
);

const ShopsList = () => (
  <section className="bg-white px-[65px] pt-[43px] pb-[41px]">
    <ShopFilter active="BY LIST" />
    <table className="w-full mt-3 text-left text-[8px] leading-3 text-[#777]">
      <thead>
        <tr className="h-[18px] text-[7px] tracking-[0.5px] text-[#aaa]">
          <th className="p-0 w-[49%] font-bold">NAME AND ADRESS</th>
          <th className="p-0 font-bold">PHONE NUMBER</th>
          <th className="p-0 w-[55px] font-bold">OPERATION</th>
        </tr>
      </thead>
      <tbody>
        {[1, 2, 3, 4].map((id) => (
          <tr key={id} className="h-[18px]">
            <td className="p-0">1600 Amphitheatre Parkway Mountain View, CA 94043</td>
            <td className="p-0">+1 650-253-0000</td>
            <td className="p-0">10:00 - 21:00</td>
          </tr>
        ))}
      </tbody>
    </table>
  </section>
);

const ShopsOnMap = () => (
  <section className="bg-white px-[65px] pt-[43px] pb-[42px]">
    <ShopFilter active="ON MAP" />
    <div className="relative h-[372px] mt-4">
      <StreetMap
        map={montrealMap}
        pins={[[326, 350], [575, 428], [288, 855], [1044, 258], [1030, 908]]}
        title="Shops on the map"
      />
      <Popup className="left-[201px] top-[175px] bg-white text-[#555]" tail="border-t-white" tailPos="left-[22px]" />
    </div>
  </section>
);

const ShopsInCity = () => (
  <section className="bg-white px-[65px] pt-[39px]">
    <Heading>
      Shops in{' '}
      <a href="#city" className="inline-block border-b border-dotted border-[#e8702f] text-[#e0651f]">Moscow</a>
    </Heading>
    <div className="grid grid-cols-[262fr_179fr_207fr] mt-[17px] pb-[15px] border-b border-[#ededed]">
      <div>
        <Caption>Services</Caption>
        <div className="grid grid-cols-[97px_97px] gap-y-[7px] mt-[10px]">
          <CheckItem>Service one</CheckItem>
          <CheckItem>Service four</CheckItem>
          <CheckItem>Service two</CheckItem>
          <CheckItem>Service five</CheckItem>
          <CheckItem>Service three</CheckItem>
          <CheckItem>Service six</CheckItem>
        </div>
      </div>
      <div>
        <Caption>Operation</Caption>
        <div className="flex items-center gap-[5px] mt-[10px]">
          <TimeField label="From" />
          <span className="w-[7px] h-px bg-[#999]" />
          <TimeField label="To" />
        </div>
        <div className="grid grid-cols-[69px_69px] mt-2">
          <CheckItem>24 hours</CheckItem>
          <CheckItem>Now</CheckItem>
        </div>
      </div>
      <div>
        <Caption className="mb-[10px]">Find shop</Caption>
        <TextField label="By street or any keyword" />
        <p className="mt-[7px] text-[8px] leading-3 text-[#a6a6a6]">
          Example: <a href="#example" className="inline-block border-b border-dotted border-[#aaa]">near red square</a>
        </p>
      </div>
    </div>
    <div className="grid grid-cols-[165fr_441fr] gap-x-[42px] mt-4">
      <ul className="text-[#b0b0b0]">
        {[1, 2, 3, 4, 5, 6].map((id) => (
          <li key={id} className="grid grid-cols-[23px_1fr] h-[59px] pt-4 border-b border-[#ededed] last:border-b-0">
            <PinIcon className="w-[6px] h-[11px] mt-px ml-[2px]" />
            <Address />
          </li>
        ))}
      </ul>
      <div className="h-[372px]">
        <StreetMap
          map={montrealMap}
          crop={207}
          pins={[[718, 358], [977, 327], [1205, 252], [1128, 547], [1157, 640], [719, 686], [879, 841], [1128, 1143]]}
          title="Shops in Moscow"
        />
      </div>
    </div>
  </section>
);

const App = () => {
  return (
    <main className="bg-[#ededed] text-[#454545] font-['Lato',sans-serif]">
      <ContactSplit />
      <div className="h-10" />
      <ContactDark />
      <ContactCards />
      <ContactHero />
      <ContactWide />
      <ShopsCard />
      <ShopsList />
      <div className="h-[43px]" />
      <ShopsOnMap />
      <div className="h-[43px]" />
      <ShopsInCity />
      <footer className="bg-white px-[7px] pt-[13px] pb-2 font-['Noto_Sans','Noto_Sans_CJK_SC',sans-serif] text-[15px] leading-5 font-bold text-[#333]">
        <span>素材天下 sucaisucai.com</span>
        <span className="ml-2">编号：01139668</span>
      </footer>
    </main>
  );
};

export default App;
